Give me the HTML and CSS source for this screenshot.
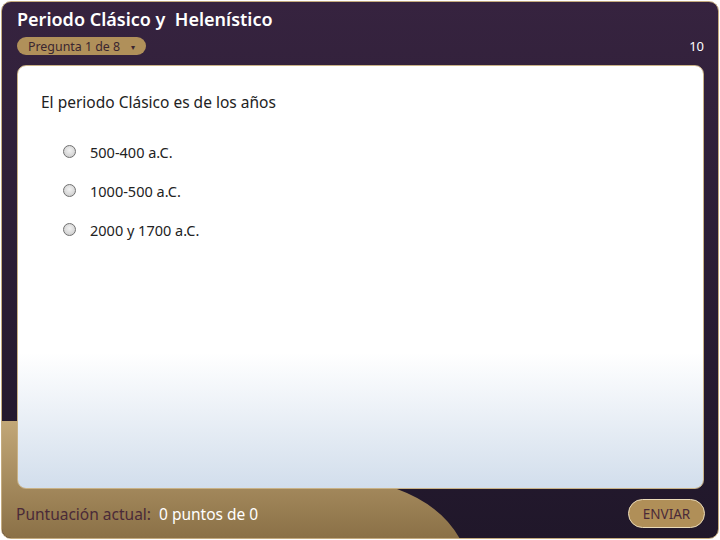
FILE: index.html
```html
<!DOCTYPE html>
<html lang="es">
<head>
    <meta charset="UTF-8">
    <title>Periodo Clásico y Helenístico</title>
    <link rel="stylesheet" href="styles.css">
</head>
<body>
    <div class="frame">
        <!-- gold decoration behind the card -->
        <svg class="deco" width="718" height="538" viewBox="0 0 718 538">
            <defs>
                <linearGradient id="gold" x1="0" y1="0" x2="0" y2="1">
                    <stop offset="0" stop-color="#c2a777"/>
                    <stop offset="1" stop-color="#8a7046"/>
                </linearGradient>
            </defs>
            <path d="M0 420 L40 420 L40 488 L396 488 Q440 504 459 538 L0 538 Z" fill="url(#gold)"/>
        </svg>

        <header class="top">
            <h1 class="title">Periodo Clásico y &nbsp;Helenístico</h1>
            <div class="meta">
                <span class="pill">Pregunta 1 de 8 <span class="caret">&#9662;</span></span>
                <span class="points">10</span>
            </div>
        </header>

        <main class="card">
            <p class="question">El periodo Clásico es de los años</p>
            <ul class="answers">
                <li><span class="radio"></span>500-400 a.C.</li>
                <li><span class="radio"></span>1000-500 a.C.</li>
                <li><span class="radio"></span>2000 y 1700 a.C.</li>
            </ul>
        </main>

        <footer class="bottom">
            <p class="score">Puntuación actual: <span class="score-value">0 puntos de 0</span></p>
            <button class="send">ENVIAR</button>
        </footer>
    </div>
</body>
</html>
```

FILE: styles.css
```css
* {
    margin: 0;
    padding: 0;
    box-sizing: border-box;
}

body {
    background: #fff;
    font-family: "Noto Sans", "Open Sans", sans-serif;
}

.frame {
    position: relative;
    width: 718px;
    height: 538px;
    margin: 1px 0 0 1px;
    border: 1px solid #c4ab7e;
    border-radius: 10px;
    overflow: hidden;
    background: linear-gradient(to bottom, #36233f, #20172a);
    display: flex;
    flex-direction: column;
    padding: 0 14px 0 15px;
}

.deco {
    position: absolute;
    left: -1px;
    top: -1px;
}

.top {
    position: relative;
    height: 63px;
    padding-top: 6px;
}

.title {
    font-size: 18px;
    font-weight: 600;
    line-height: 22px;
    color: #fff;
}

.meta {
    display: flex;
    justify-content: space-between;
    align-items: center;
    margin-top: 7px;
}

.pill {
    display: inline-flex;
    align-items: center;
    height: 18px;
    width: 129px;
    padding: 0 0 0 11px;
    border-radius: 9px;
    background: #b0905a;
    color: #3a2630;
    font-size: 12.4px;
}

.caret {
    font-size: 8px;
    margin-left: 11px;
}

.points {
    color: #fff;
    font-size: 13px;
}

.card {
    position: relative;
    height: 424px;
    border: 1px solid #c9b287;
    border-radius: 9px;
    background: linear-gradient(to bottom, #fff 68%, #d2deec 100%);
    padding: 25px 0 0 23px;
}

.question {
    font-size: 15.5px;
    color: #222;
    line-height: 22px;
}

.answers {
    list-style: none;
    margin: 19px 0 0 22px;
}

.answers li {
    display: flex;
    align-items: center;
    height: 39px;
    font-size: 14.5px;
    color: #222;
}

.radio {
    width: 13px;
    height: 13px;
    border-radius: 50%;
    border: 1px solid #707070;
    background: radial-gradient(circle at 50% 40%, #f2f2f2, #c6c6c6);
    margin-right: 14px;
}

.bottom {
    position: relative;
    flex: 1;
    display: flex;
    justify-content: space-between;
    align-items: center;
}

.score {
    font-size: 15.5px;
    color: #4a2a38;
    margin-left: -1px;
}

.score-value {
    color: #fff;
    margin-left: 4px;
}

.send {
    width: 77px;
    height: 29px;
    border: 1px solid #eadbb9;
    border-radius: 15px;
    background: #b08f58;
    color: #4a2a38;
    font-family: "Noto Sans", "Open Sans", sans-serif;
    font-size: 13.5px;
    margin-right: -1px;
}
```
